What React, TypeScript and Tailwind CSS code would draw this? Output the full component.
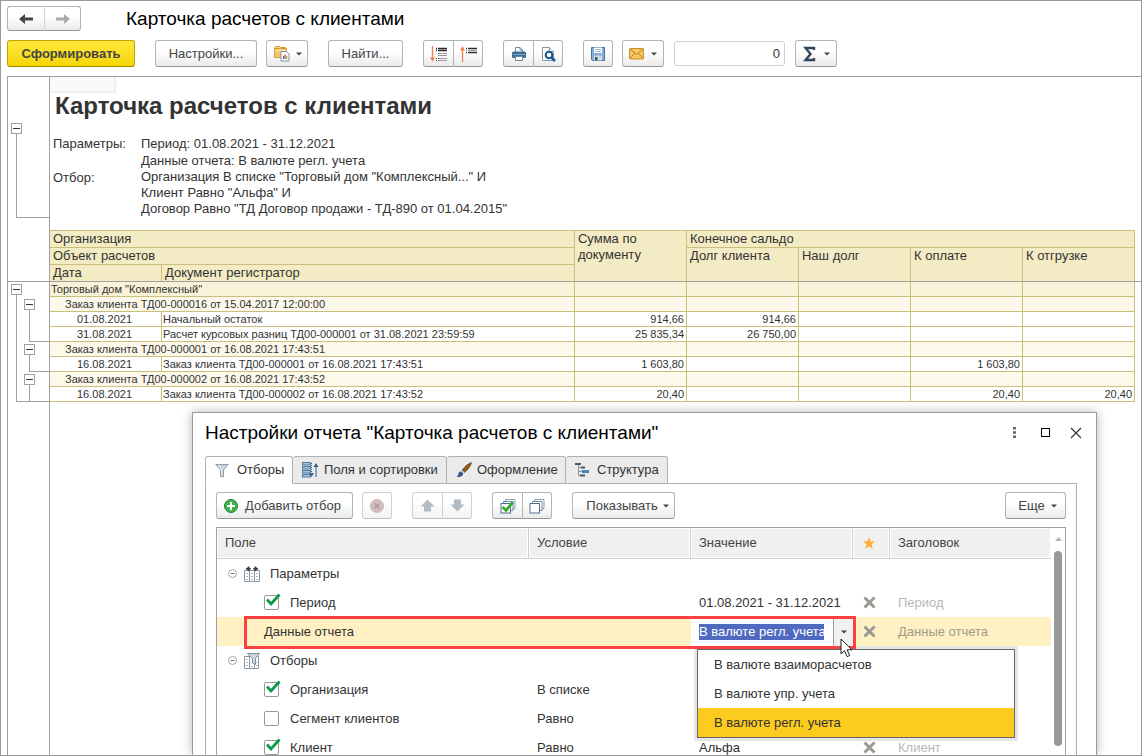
import React from "react";
import clsx from "clsx";

type ReportRow = {
  kind: "org" | "order" | "doc";
  title: string;
  date?: string;
  sums?: string[];
};

const reportRows: ReportRow[] = [
  { kind: "org", title: 'Торговый дом "Комплексный"' },
  { kind: "order", title: "Заказ клиента ТД00-000016 от 15.04.2017 12:00:00" },
  { kind: "doc", date: "01.08.2021", title: "Начальный остаток", sums: ["914,66", "914,66", "", "", ""] },
  {
    kind: "doc",
    date: "31.08.2021",
    title: "Расчет курсовых разниц ТД00-000001 от 31.08.2021 23:59:59",
    sums: ["25 835,34", "26 750,00", "", "", ""],
  },
  { kind: "order", title: "Заказ клиента ТД00-000001 от 16.08.2021 17:43:51" },
  {
    kind: "doc",
    date: "16.08.2021",
    title: "Заказ клиента ТД00-000001 от 16.08.2021 17:43:51",
    sums: ["1 603,80", "", "", "1 603,80", ""],
  },
  { kind: "order", title: "Заказ клиента ТД00-000002 от 16.08.2021 17:43:52" },
  {
    kind: "doc",
    date: "16.08.2021",
    title: "Заказ клиента ТД00-000002 от 16.08.2021 17:43:52",
    sums: ["20,40", "", "", "20,40", "20,40"],
  },
];

const options = ["В валюте взаиморасчетов", "В валюте упр. учета", "В валюте регл. учета"];

const face =
  "flex shrink-0 items-center border border-[#b4b4b4] border-b-[#979797] bg-linear-to-b from-white from-40% to-[#ebebeb] text-[#444]";
const btn = clsx(face, "h-[27px]");

function Btn({ className, children, ...rest }: React.ComponentProps<"button">) {
  return (
    <button type="button" className={clsx(btn, "rounded-[3px]", className)} {...rest}>
      {children}
    </button>
  );
}

// two buttons glued together
function Pair({ labels, children, disabled }: { labels: string[]; children: React.ReactNode[]; disabled?: boolean }) {
  return (
    <div className={clsx("flex shrink-0", disabled && "opacity-60")}>
      <button
        type="button"
        aria-label={labels[0]}
        disabled={disabled}
        className={clsx(btn, "w-[31px] justify-center rounded-l-[3px]")}
      >
        {children[0]}
      </button>
      <button
        type="button"
        aria-label={labels[1]}
        disabled={disabled}
        className={clsx(btn, "w-[29px] justify-center rounded-r-[3px] border-l-0")}
      >
        {children[1]}
      </button>
    </div>
  );
}

function Caret() {
  return (
    <svg width="6" height="4" viewBox="0 0 6 4" className="shrink-0">
      <path d="M0 0.5h6L3 3.5z" fill="#444" />
    </svg>
  );
}

function NavArrow({ flip, color }: { flip?: boolean; color: string }) {
  return (
    <svg width="14" height="12" viewBox="0 0 14 12" className={clsx(flip && "rotate-180")}>
      <path d="M0 6l6-5v3.500L4.500 6 6 7.500V11z" fill={color} />
      <path d="M2 6h12" fill="none" stroke={color} strokeWidth="3" />
    </svg>
  );
}

function VariantsIcon() {
  return (
    <svg width="17" height="17" viewBox="0 0 17 17" className="shrink-0">
      <path d="M1.500 4V2.500l1-1h4l1 1h5V4" fill="#f7d27c" stroke="#d79b35" />
      <path d="M1.500 3.500h12v9h-12z" fill="#f5c76b" stroke="#d79b35" />
      <path d="M2 5.500h11" stroke="#fbe6b4" />
      <path d="M8 6.500h5.500l2.500 2.500v7H8z" fill="#fff" stroke="#7d93a8" />
      <path d="M10.500 14v-3" stroke="#3c78b4" />
      <path d="M12 14v-4.500" stroke="#e0524a" strokeWidth="1.500" />
      <path d="M13.800 14v-3" stroke="#49a35a" />
    </svg>
  );
}

function ExpandIcon() {
  return (
    <svg width="17" height="16" viewBox="0 0 17 16" className="shrink-0">
      <path d="M2.500 0v14" stroke="#f08250" strokeWidth="1.300" />
      <path d="M0 11.500h5L2.500 15.500z" fill="#f08250" />
      <path d="M6 2.500h1M8 2.500h9M6 4.500h1M8 4.500h9" stroke="#2b2b33" strokeWidth="1.300" />
      <path d="M8 7.500h9M8 9.500h9M8 12.500h9M8 14.500h9" stroke="#9a9a9a" />
      <path d="M8 7.500h1M8 12.500h1M6 12.500h1M6 14.500h1" stroke="#444" />
    </svg>
  );
}

function CollapseIcon() {
  return (
    <svg width="17" height="16" viewBox="0 0 17 16" className="shrink-0">
      <path d="M2.500 2v14" stroke="#f08250" strokeWidth="1.300" />
      <path d="M0 4.500h5L2.500 0z" fill="#f08250" />
      <path d="M6 2.500h1M8 2.500h9M6 6.500h1M8 6.500h9" stroke="#2b2b33" strokeWidth="1.300" />
      <path d="M6 4.500h1M8 4.500h9" stroke="#9a9a9a" />
    </svg>
  );
}

function PrinterIcon() {
  return (
    <svg width="16" height="16" viewBox="0 0 16 16">
      <path d="M4.500 6V1.500h4.500l2.500 2.500v2" fill="#fff" stroke="#6b87a3" />
      <path d="M9 1.500V4h2.500" fill="none" stroke="#6b87a3" />
      <rect x="1" y="5.500" width="14" height="6.500" rx="1.500" fill="#3c6c98" />
      <path d="M2 8.500h12" stroke="#86a9c9" />
      <path d="M4.500 10.500h7v4h-7z" fill="#fff" stroke="#6b87a3" />
    </svg>
  );
}

function PreviewIcon() {
  return (
    <svg width="16" height="16" viewBox="0 0 16 16">
      <path d="M2.500 1.500h7l4 4v9h-11z" fill="#fff" stroke="#8397aa" />
      <path d="M9.500 1.500v4h4" fill="#eef3f8" stroke="#8397aa" />
      <circle cx="9" cy="9" r="3.300" fill="#fff" stroke="#17568c" strokeWidth="2" />
      <path d="M11.500 11.500l3.500 3.500" stroke="#17568c" strokeWidth="2.500" />
    </svg>
  );
}

function FloppyIcon() {
  return (
    <svg width="16" height="16" viewBox="0 0 16 16">
      <path d="M1.500 1.500h13v13h-12l-1-1z" fill="#86afd8" stroke="#47719c" />
      <path d="M4 1.500h8v5.500H4z" fill="#fff" />
      <path d="M5 3.500h6M5 5.500h6" stroke="#9dbbd8" />
      <path d="M4 9.500h8v5H4z" fill="#d3dae0" />
      <path d="M5 11h2.500v3.500H5z" fill="#34587c" />
    </svg>
  );
}

function MailIcon() {
  return (
    <svg width="15" height="12" viewBox="0 0 15 12">
      <rect x="0.500" y="0.500" width="14" height="10.500" rx="1" fill="#f6c860" stroke="#cc8d24" />
      <path d="M1 1l6.500 5.500L14 1M1 10.500l4.500-5M14 10.500l-4.500-5" fill="none" stroke="#b97c1c" />
    </svg>
  );
}

function SigmaIcon() {
  return (
    <svg width="13" height="16" viewBox="0 0 13 16">
      <path d="M11 4V2H2.500l5 6-5 6H11v-2" fill="none" stroke="#33475b" strokeWidth="2.400" />
    </svg>
  );
}

function FunnelIcon() {
  return (
    <svg width="14" height="14" viewBox="0 0 14 14">
      <path d="M0.800 1.500h12.400L8.500 7v6.500h-3V7z" fill="#cdd4da" stroke="#8e9ba6" />
      <path d="M3.500 2.500L6.500 7v6" fill="none" stroke="#f2f5f7" />
    </svg>
  );
}

function SortIcon() {
  return (
    <svg width="17" height="16" viewBox="0 0 17 16" className="shrink-0">
      {[1, 5, 9, 13].map((y) => (
        <rect key={y} x="0.500" y={y - 0.500} width="8" height="2.500" fill="#a9c3da" stroke="#537a9e" />
      ))}
      <path d="M9.500 1v11" stroke="#33638f" strokeDasharray="1 1" />
      <path d="M7 11h5l-2.500 4z" fill="#33638f" />
      <path d="M14 15V3" stroke="#33638f" />
      <path d="M11.500 5h5L14 1z" fill="#33638f" />
    </svg>
  );
}

function BrushIcon() {
  return (
    <svg width="16" height="16" viewBox="0 0 16 16" className="shrink-0">
      <path d="M15.500 0.500C12 1.500 8 5 6 8.500l2.500 2C11.500 8 15 4 15.500 0.500z" fill="#8a5a22" stroke="#5f3c13" strokeWidth="0.600" />
      <path d="M6.200 8.300L5 9.800l2 1.800 1.400-1.300z" fill="#c9ccd4" />
      <path d="M5 9.500c-2 0-2.500 1.500-2.700 3C2 13.800 1 14.600 0.500 15c3 0.500 6.500-0.500 6.800-3.500z" fill="#3b4f92" />
    </svg>
  );
}

function StructureIcon() {
  return (
    <svg width="14" height="14" viewBox="0 0 14 14" className="shrink-0">
      <path d="M3.500 2v10.500H7M3.500 4.500H7M3.500 8.500H7" fill="none" stroke="#8c969e" />
      <path d="M0 0h6v2H0zM6 3.500h4v2H6zM5 11.500h5v2H5z" fill="#4b5a68" />
      <path d="M7 7h7v3H7z" fill="#3f86c4" />
    </svg>
  );
}

function PlusIcon() {
  return (
    <svg width="14" height="14" viewBox="0 0 14 14" className="shrink-0">
      <circle cx="7" cy="7" r="6.500" fill="#3fb54b" stroke="#21812c" />
      <path d="M7 3v8M3 7h8" stroke="#fff" strokeWidth="2" />
    </svg>
  );
}

function RemoveIcon() {
  return (
    <svg width="14" height="14" viewBox="0 0 14 14">
      <circle cx="7" cy="7" r="6.500" fill="#b99092" stroke="#a08384" />
      <path d="M4.500 4.500l5 5M9.500 4.500l-5 5" stroke="#70585a" strokeWidth="1.500" />
    </svg>
  );
}

function FatArrow({ down }: { down?: boolean }) {
  return (
    <svg width="15" height="13" viewBox="0 0 15 13" className={clsx(down && "rotate-180")}>
      <path d="M7.500 0.500L14.500 7.500h-3.500v5H4v-5H0.500z" fill="#7d8f9e" />
    </svg>
  );
}

function SheetsIcon({ checked }: { checked?: boolean }) {
  return (
    <svg width="16" height="16" viewBox="0 0 16 16">
      <path d="M5.500 3V1.500h9.500v9H13" fill="#fff" stroke="#8ca0b3" />
      <path d="M3.500 5V3.500h9.500v9H11" fill="#fff" stroke="#708aa1" />
      <rect x="1" y="5.500" width="9.500" height="9.500" fill="#fff" stroke="#4e6f8f" />
      {checked && <path d="M2.500 9l3.500 3.500 7-8.500" fill="none" stroke="#35ad2f" strokeWidth="2.800" />}
    </svg>
  );
}

function ParamsIcon() {
  return (
    <svg width="16" height="16" viewBox="0 0 16 16">
      <path d="M0.500 4.500h15v11H0.500z" fill="#fff" stroke="#8b98a3" />
      <path d="M5.500 4.500v11M10.500 4.500v11" stroke="#8b98a3" />
      <path d="M2 7.500h2M7 7.500h2M12 7.500h2M2 10.500h2M7 10.500h2M12 10.500h2M2 13.500h2M7 13.500h2M12 13.500h2" stroke="#a9b8c4" />
      <path d="M5.500 0L1.500 2.800l4 2.900zM10.500 0l4 2.800-4 2.900z" fill="#2e3c49" />
      <path d="M4 2.800h3M9 2.800h3" stroke="#2e3c49" strokeWidth="1.200" />
    </svg>
  );
}

function FilterSheetIcon() {
  return (
    <svg width="16" height="16" viewBox="0 0 16 16">
      <path d="M0.500 3.500h14v12h-14z" fill="#fff" stroke="#8b98a3" />
      <path d="M5.500 3.500v12M10.500 8v7.500" stroke="#8b98a3" />
      <path d="M2 6.500h2M2 9.500h2M2 12.500h2M7 13.500h2M12 9.500h1.500M12 12.500h1.500" stroke="#a9b8c4" />
      <path d="M3.500 0.500h12l-4 5v6l-3-1.500V5.500z" fill="#ced6dc" stroke="#8491a0" />
    </svg>
  );
}

// collapse box on the left of the report
function Toggle() {
  return (
    <button
      type="button"
      aria-label="Свернуть"
      className="flex size-[11px] shrink-0 items-center justify-center border border-[#a0a0a0] bg-white"
    >
      <span className="h-px w-[7px] bg-[#333]" />
    </button>
  );
}

function ReportCols() {
  return (
    <colgroup>
      <col className="w-[112px]" />
      <col />
      <col className="w-[112px]" />
      <col className="w-[112px]" />
      <col className="w-[112px]" />
      <col className="w-[112px]" />
      <col className="w-[112px]" />
    </colgroup>
  );
}

const th = "border-t border-r border-[#cabf7b] bg-[#f3ebc4] px-[3px] text-left align-top font-normal";

function Report() {
  return (
    <div className="ml-[6px] flex flex-1 flex-col border-t border-l border-[#a0a0a0] text-[#333]">
      {/* frozen top part */}
      <div className="flex border-b border-[#a0a0a0]">
        <div className="w-[42px] shrink-0 border-r border-[#a0a0a0] pt-[46px] pl-[3px]">
          <Toggle />
          <div className="ml-[5px] h-[84px] border-b border-l border-[#a0a0a0]" />
        </div>
        <div className="min-w-0 flex-1 pr-[6px]">
          <div className="h-4 w-[66px] border-r-2 border-b-2 border-[#f0f0f0] bg-[#fafafa]" />
          <h2 className="pl-[5px] text-[24px] leading-[26px] font-bold">Карточка расчетов с клиентами</h2>
          <dl className="mt-4 grid grid-cols-[88px_1fr] pl-[3px] leading-[17px]">
            <dt>Параметры:</dt>
            <dd>
              Период: 01.08.2021 - 31.12.2021
              <br />
              Данные отчета: В валюте регл. учета
            </dd>
            <dt>Отбор:</dt>
            <dd className="leading-4">
              Организация В списке "Торговый дом "Комплексный..." И
              <br />
              Клиент Равно "Альфа" И
              <br />
              Договор Равно "ТД Договор продажи - ТД-890 от 01.04.2015"
            </dd>
          </dl>
          <table className="mt-[13px] w-full table-fixed border-separate border-spacing-0 leading-4">
            <ReportCols />
            <thead>
              <tr className="h-[17px]">
                <th colSpan={2} className={th}>Организация</th>
                <th rowSpan={3} className={th}>Сумма по документу</th>
                <th colSpan={4} className={th}>Конечное сальдо</th>
              </tr>
              <tr className="h-[17px]">
                <th colSpan={2} className={th}>Объект расчетов</th>
                <th rowSpan={2} className={th}>Долг клиента</th>
                <th rowSpan={2} className={th}>Наш долг</th>
                <th rowSpan={2} className={th}>К оплате</th>
                <th rowSpan={2} className={th}>К отгрузке</th>
              </tr>
              <tr className="h-[17px]">
                <th className={th}>Дата</th>
                <th className={th}>Документ регистратор</th>
              </tr>
            </thead>
          </table>
        </div>
      </div>

      <div className="flex flex-1">
        <div className="w-[42px] shrink-0 border-r border-[#a0a0a0] pt-[2px] pl-[3px]">
          <div className="flex h-[118px]">
            <div className="flex w-[13px] flex-col">
              <Toggle />
              <div className="-mr-[5px] ml-[5px] flex-1 border-b border-l border-[#a0a0a0]" />
            </div>
            <div className="flex flex-1 flex-col pt-[15px]">
              <Toggle />
              <div className="mb-[2px] ml-[5px] h-[32px] border-b border-l border-[#a0a0a0]" />
              <Toggle />
              <div className="mb-[2px] ml-[5px] h-[17px] border-b border-l border-[#a0a0a0]" />
              <Toggle />
              <div className="ml-[5px] h-[17px] border-b border-l border-[#a0a0a0]" />
            </div>
          </div>
        </div>
        <div className="min-w-0 flex-1 pr-[6px]">
          <table className="w-full table-fixed border-separate border-spacing-0 text-[11px] leading-[14px] whitespace-nowrap">
            <ReportCols />
            <tbody>
              {reportRows.map((row, i) => {
                const cell = clsx(
                  "border-r border-b border-[#cabf7b] p-0 pr-[2px]",
                  row.kind === "org" && "bg-[#f8f2d8]",
                  row.kind === "order" && "bg-[#fcf9eb]"
                );
                const sums = row.sums ?? ["", "", "", "", ""];
                return (
                  <tr key={i} className="h-[15px]">
                    {row.kind === "doc" ? (
                      <>
                        <td className={clsx(cell, "text-center")}>{row.date}</td>
                        <td className={clsx(cell, "pl-px")}>{row.title}</td>
                      </>
                    ) : (
                      <td colSpan={2} className={clsx(cell, row.kind === "org" ? "pl-px" : "pl-[15px]")}>
                        {row.title}
                      </td>
                    )}
                    {sums.map((sum, j) => (
                      <td key={j} className={clsx(cell, "text-right")}>{sum}</td>
                    ))}
                  </tr>
                );
              })}
            </tbody>
          </table>
        </div>
      </div>
    </div>
  );
}

function Check({ label, checked }: { label: string; checked: boolean }) {
  return (
    <label className="flex items-center gap-[11px] pl-[47px]">
      <span className="relative flex">
        <input
          type="checkbox"
          defaultChecked={checked}
          className="peer size-[15px] appearance-none rounded-[2px] border border-[#999] bg-white"
        />
        <svg
          width="16"
          height="15"
          viewBox="0 0 16 15"
          className="pointer-events-none absolute -top-[2px] left-[1px] hidden peer-checked:block"
        >
          <path d="M2 6.500l4 4.500 8.500-9.500" fill="none" stroke="#0a9a4a" strokeWidth="2.800" />
        </svg>
      </span>
      {label}
    </label>
  );
}

function Group({ label, children }: { label: string; children: React.ReactNode }) {
  return (
    <div className="flex items-center pl-[11px]">
      <button type="button" aria-label={"Свернуть " + label} className="mr-[7px]">
        <svg width="9" height="9" viewBox="0 0 9 9">
          <circle cx="4.500" cy="4.500" r="4" fill="#fff" stroke="#a5a5a5" />
          <path d="M2.500 4.500h4" stroke="#777" />
        </svg>
      </button>
      {children}
      <span className="ml-[10px]">{label}</span>
    </div>
  );
}

function CrossIcon() {
  return (
    <svg width="13" height="13" viewBox="0 0 13 13" className="mx-auto">
      <path d="M1.500 1.500l10 10M11.500 1.500l-10 10" stroke="#9a9a93" strokeWidth="3" />
    </svg>
  );
}

function FilterRow({
  name,
  cond,
  value,
  title,
}: {
  name: React.ReactNode;
  cond?: string;
  value?: string;
  title?: string;
}) {
  return (
    <tr className="h-[29px]">
      <td className="p-0">{name}</td>
      <td className="p-0 pl-2">{cond}</td>
      <td className="p-0 pl-2">{value}</td>
      <td className="p-0 pr-1">{title && <CrossIcon />}</td>
      <td className="p-0 pl-2 text-[#b8b8b8]">{title}</td>
    </tr>
  );
}

function ValueEditor() {
  return (
    <div className="flex h-[29px] bg-white pl-2">
      <div className="flex flex-1 items-center">
        <input
          aria-label="Данные отчета"
          defaultValue="В валюте регл. учета"
          className="h-4 w-[125px] bg-[#5069c0] text-white outline-none"
        />
      </div>
      <button
        type="button"
        aria-label="Выбрать из списка"
        className="flex w-5 items-center justify-center border-l border-[#a0a0a0] bg-[#f0f0f0]"
      >
        <Caret />
      </button>
      <ul
        role="listbox"
        className="absolute top-8 left-[6px] z-10 w-[318px] border border-[#666] bg-white shadow-[0_0_0_3px_#e6e6e6]"
      >
        {options.map((o, i) => (
          <li
            key={o}
            role="option"
            aria-selected={i === 2}
            className={clsx("h-[29px] pl-4 leading-[29px]", i === 2 && "bg-[#fbcb20]")}
          >
            {o}
          </li>
        ))}
      </ul>
      <svg width="13" height="20" viewBox="0 0 13 20" className="pointer-events-none absolute top-[21px] left-[149px] z-30">
        <path d="M1 1v15l3.500-3.300 2.600 6 2.600-1.200-2.600-5.700H12z" fill="#fff" stroke="#222" />
      </svg>
    </div>
  );
}

const headCell =
  "border-b border-[#cfcfcf] bg-[#f0f0f0] p-0 text-left font-normal text-[#444] shadow-[inset_0_0_0_1px_#fff]";

function FilterTable() {
  return (
    <div className="mt-2 flex min-h-0 flex-1 border border-b-0 border-[#a0a0a0]">
      <table className="w-full min-w-0 flex-1 table-fixed border-separate border-spacing-0 self-start">
        <colgroup>
          <col />
          <col className="w-[162px]" />
          <col className="w-[162px]" />
          <col className="w-[37px]" />
          <col className="w-[161px]" />
        </colgroup>
        <thead>
          <tr className="h-[31px]">
            <th className={clsx(headCell, "border-r pl-2")}>Поле</th>
            <th className={clsx(headCell, "border-r pl-2")}>Условие</th>
            <th className={clsx(headCell, "border-r pl-2")}>Значение</th>
            <th aria-label="Избранное" className={clsx(headCell, "border-r pr-1")}>
              <svg width="12" height="12" viewBox="0 0 12 12" className="mx-auto">
                <path d="M6 0l1.600 4.200L12 4.500 8.600 7.300 9.800 12 6 9.300 2.200 12l1.200-4.700L0 4.500l4.400-0.300z" fill="#ffb03c" />
              </svg>
            </th>
            <th className={clsx(headCell, "pl-2")}>Заголовок</th>
          </tr>
        </thead>
        <tbody>
          <FilterRow name={<Group label="Параметры"><ParamsIcon /></Group>} />
          <FilterRow name={<Check label="Период" checked />} value="01.08.2021 - 31.12.2021" title="Период" />
          <tr className="h-[29px] bg-[#fff1c4]">
            <td className="relative p-0 pl-[47px]">
              Данные отчета
              {/* red frame runs over the next columns up to the value */}
              <div className="pointer-events-none absolute -top-px -right-[327px] left-[27px] z-20 h-[33px] border-3 border-[#fa4242]" />
            </td>
            <td className="p-0" />
            <td className="relative p-0">
              <ValueEditor />
            </td>
            <td className="p-0 pr-1">
              <CrossIcon />
            </td>
            <td className="p-0 pl-2 text-[#a09c88]">Данные отчета</td>
          </tr>
          <FilterRow name={<Group label="Отборы"><FilterSheetIcon /></Group>} />
          <FilterRow name={<Check label="Организация" checked />} cond="В списке" />
          <FilterRow name={<Check label="Сегмент клиентов" checked={false} />} cond="Равно" />
          <FilterRow name={<Check label="Клиент" checked />} cond="Равно" value="Альфа" title="Клиент" />
        </tbody>
      </table>
      <div className="flex w-[14px] shrink-0 flex-col items-center pt-[9px]">
        <svg width="7" height="4" viewBox="0 0 7 4" className="shrink-0">
          <path d="M3.500 0L7 4H0z" fill="#b5b5b5" />
        </svg>
        <div className="mt-[10px] h-[195px] w-2 shrink-0 rounded-full bg-[#999]" />
      </div>
    </div>
  );
}

const tab = "flex h-7 items-center rounded-t-[3px] border border-[#b0b0b0] pl-[9px]";

function SettingsDialog() {
  return (
    <div
      role="dialog"
      aria-label="Настройки отчета"
      className="absolute top-[411px] right-[44px] bottom-0 left-[191px] flex flex-col border border-b-0 border-[#999] bg-white text-[#333] shadow-[0_0_10px_rgba(0,0,0,0.3)]"
    >
      <div className="flex h-[43px] shrink-0 items-center pr-[14px] pb-1 pl-3">
        <h2 className="flex-1 text-[19px] leading-6 text-black">Настройки отчета "Карточка расчетов с клиентами"</h2>
        <button type="button" aria-label="Меню" className="flex w-[31px] justify-center">
          <svg width="3" height="11" viewBox="0 0 3 11">
            <path d="M0 0h3v2.500H0zM0 4.200h3v2.500H0zM0 8.400h3v2.500H0z" fill="#666" />
          </svg>
        </button>
        <button type="button" aria-label="Развернуть" className="flex w-[31px] justify-center">
          <span className="size-[9px] border border-black" />
        </button>
        <button type="button" aria-label="Закрыть" className="ml-[9px]">
          <svg width="12" height="12" viewBox="0 0 12 12">
            <path d="M1 1l10 10M11 1L1 11" stroke="#333" strokeWidth="1.200" />
          </svg>
        </button>
      </div>

      <div role="tablist" className="relative z-10 ml-3 flex shrink-0">
        <button type="button" role="tab" aria-selected className={clsx(tab, "w-[88px] gap-2 border-b-white bg-white")}>
          <FunnelIcon />
          Отборы
        </button>
        <button type="button" role="tab" className={clsx(tab, "w-[154px] gap-[5px] border-l-0 bg-[#ebebeb]")}>
          <SortIcon />
          Поля и сортировки
        </button>
        <button type="button" role="tab" className={clsx(tab, "w-[119px] gap-[5px] border-l-0 bg-[#ebebeb]")}>
          <BrushIcon />
          Оформление
        </button>
        <button type="button" role="tab" className={clsx(tab, "w-[102px] gap-2 border-l-0 bg-[#ebebeb]")}>
          <StructureIcon />
          Структура
        </button>
      </div>

      <div className="-mt-px mr-[19px] ml-3 flex min-h-0 flex-1 flex-col border border-b-0 border-[#b0b0b0] px-[10px] pt-2">
        <div className="flex shrink-0">
          <Btn className="w-[137px] gap-[7px] pl-[7px]">
            <PlusIcon />
            Добавить отбор
          </Btn>
          <Btn aria-label="Удалить" disabled className="mr-5 ml-[9px] w-[30px] justify-center opacity-60">
            <RemoveIcon />
          </Btn>
          <Pair labels={["Вверх", "Вниз"]} disabled>
            <FatArrow />
            <FatArrow down />
          </Pair>
          <div className="w-5" />
          <Pair labels={["Установить флажки", "Снять флажки"]}>
            <SheetsIcon checked />
            <SheetsIcon />
          </Pair>
          <Btn className="ml-5 w-[103px] justify-center gap-[5px] pl-2">
            Показывать
            <Caret />
          </Btn>
          <Btn className="ml-auto w-[61px] justify-center gap-[6px] pl-1">
            Еще
            <Caret />
          </Btn>
        </div>
        <FilterTable />
      </div>
    </div>
  );
}

export default function App() {
  return (
    <div className="relative flex h-screen flex-col overflow-hidden border border-[#999] bg-white font-['Liberation_Sans',Arial,sans-serif] text-[13px]">
      <header className="mt-[5px] flex items-center pl-[6px]">
        <div className="flex">
          <button type="button" aria-label="Назад" className={clsx(face, "h-[25px] w-[38px] justify-center rounded-l-[3px] border-r-[#d5d5d5]")}>
            <NavArrow color="#444" />
          </button>
          <button type="button" aria-label="Вперед" className={clsx(face, "h-[25px] w-9 justify-center rounded-r-[3px] border-l-0")}>
            <NavArrow flip color="#aaa" />
          </button>
        </div>
        <h1 className="ml-[45px] text-[19px] leading-6 text-black">Карточка расчетов с клиентами</h1>
      </header>

      <div className="my-[9px] flex items-center pl-[6px]">
        <button
          type="button"
          className="h-[27px] w-32 rounded-[3px] border border-[#c0a400] border-b-[#9a8400] bg-linear-to-b from-[#ffe838] to-[#f6d600] font-bold text-[#444]"
        >
          Сформировать
        </button>
        <Btn className="ml-5 w-[102px] justify-center">Настройки...</Btn>
        <Btn aria-label="Варианты отчета" className="mr-5 ml-[9px] w-[42px] justify-center gap-[6px]">
          <VariantsIcon />
          <Caret />
        </Btn>
        <Btn className="mr-5 w-[75px] justify-center">Найти...</Btn>
        <Pair labels={["Развернуть группы", "Свернуть группы"]}>
          <ExpandIcon />
          <CollapseIcon />
        </Pair>
        <div className="w-5" />
        <Pair labels={["Печать", "Просмотр"]}>
          <PrinterIcon />
          <PreviewIcon />
        </Pair>
        <Btn aria-label="Сохранить" className="ml-5 w-[30px] justify-center">
          <FloppyIcon />
        </Btn>
        <Btn aria-label="Отправить" className="ml-[9px] w-[42px] justify-center gap-[7px]">
          <MailIcon />
          <Caret />
        </Btn>
        <input
          aria-label="Сумма"
          defaultValue="0"
          className="mx-[10px] h-[25px] w-[111px] rounded-[3px] border border-[#d0d0d0] px-1 text-right text-[#333]"
        />
        <Btn aria-label="Показатели" className="w-[42px] justify-center gap-2">
          <SigmaIcon />
          <Caret />
        </Btn>
      </div>

      <Report />
      <SettingsDialog />
    </div>
  );
}
